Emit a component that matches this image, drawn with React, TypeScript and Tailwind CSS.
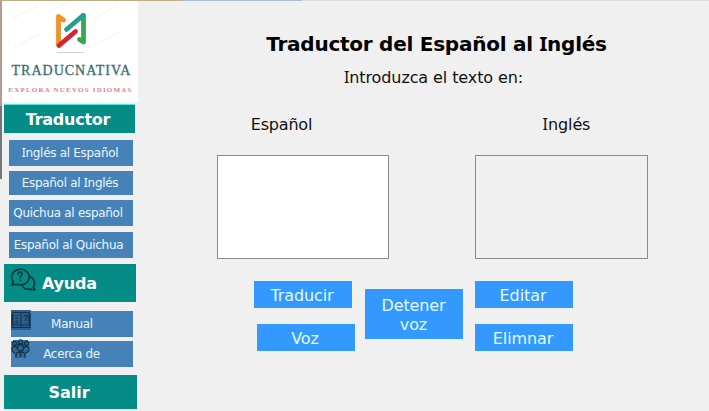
import type { ReactNode } from "react";

function Logo() {
  return (
    <svg className="mt-[10px] ml-[2px] h-[38px] w-[34px] shrink-0" viewBox="0 0 34 38" fill="none" strokeLinecap="round" strokeLinejoin="round">
      <path d="M4.500 34V5.500L9.500 9" stroke="#f0922b" strokeWidth="4.800" />
      <path d="M29.500 4.500V31L25.500 28.500" stroke="#34a853" strokeWidth="4.800" />
      <path d="M12.500 18.500L29 4.500" stroke="#23a094" strokeWidth="4.800" />
      <path d="M5 34.500L21.500 20.500" stroke="#d8232f" strokeWidth="4.800" />
    </svg>
  );
}

function ChatIcon() {
  return (
    <svg className="h-[24px] w-[27px] shrink-0 -translate-y-[3px]" viewBox="0 0 27 24" fill="none" stroke="#0b3c3f" strokeWidth="1.700" strokeLinejoin="round" strokeLinecap="round">
      <path d="M3.200 13.500A8.800 7.800 0 1 1 7.500 16.400L1.300 16.800C2.800 16 3.400 15 3.200 13.500Z" />
      <path d="M19.500 8.500C24 9.500 26 15.500 23.300 18.700L25 22L20.500 21.200C16.500 22 13 20.200 12 17" />
      <path d="M8 6C8.200 3.300 12.800 3.700 12 6.500C11.700 7.700 10.200 7.800 10.200 9.500M10.200 12.300V12.500" strokeWidth="1.800" />
    </svg>
  );
}

function ManualIcon() {
  return (
    <svg className="h-[20px] w-[20px]" viewBox="0 0 20 20" fill="none" stroke="#12344f" strokeWidth="1.200">
      <path d="M0 0H20V20H0Z" fill="#2c618d" stroke="none" />
      <path d="M2 2.500H9L10 3.500L11 2.500H18V15H11L10 16L9 15H2ZM10 3.500V16M1 4V17.500H19V4" />
      <path d="M4 6H7.500M4 8.500H7.500M4 11H7.500M4 13H7.500M13 7C13 4.500 17 4.500 16 7.500L14.500 9.500V11M14.500 13V13.500" />
    </svg>
  );
}

function PeopleIcon() {
  return (
    <svg className="h-[20px] w-[19px]" viewBox="0 0 19 20" fill="none" stroke="#12344f" strokeWidth="1.300">
      <path d="M2 1H17V12L13 19H6L1 12Z" fill="#34688f" stroke="none" />
      <circle cx="9.500" cy="9" r="3" />
      <circle cx="3.500" cy="4.500" r="2" />
      <circle cx="9.500" cy="2.800" r="2" />
      <circle cx="15.500" cy="4.500" r="2" />
      <path d="M5 19V16C5 12 14 12 14 16V19M9.500 13V18M1 12V9C2 7 5 7 6 9M13 9C14 7 17 7 18 9V12M1 12L4 14M18 12L15 14M6.500 6L8 5H11L12.500 6" />
    </svg>
  );
}

function SlabI() {
  return <span className="font-['Noto_Sans',sans-serif] leading-none">I</span>;
}

function Heading({ className, children }: { className: string; children: ReactNode }) {
  return <div className={`flex shrink-0 items-center bg-[#048c86] text-[16px] font-bold text-white ${className}`}>{children}</div>;
}

function NavItem({ className, children }: { className: string; children: ReactNode }) {
  return (
    <button className={`relative block shrink-0 bg-[#4682b7] text-center text-[12px] tracking-[-0.300px] whitespace-nowrap text-[#e6f8ff] ${className}`}>
      {children}
    </button>
  );
}

function Action({ className, children }: { className: string; children: ReactNode }) {
  return (
    <button className={`block w-[98px] shrink-0 bg-[#3399ff] pt-px pr-[2px] text-center text-[16px] leading-[19px] tracking-[-0.100px] text-[#e0fcff] ${className}`}>
      {children}
    </button>
  );
}

export default function App() {
  return (
    <div className="flex h-[411px] w-[709px] flex-col overflow-hidden bg-[#f0f0f0] font-['DejaVu_Sans',Verdana,sans-serif]">
      <div className="flex h-px shrink-0">
        <div className="w-[182px] bg-[#c1ad83]" />
        <div className="w-[120px] bg-[#aebdcb]" />
        <div className="flex-1 bg-[#dbe0e6]" />
      </div>
      <div className="flex min-h-0 flex-1">
        <div className="flex w-[2px] shrink-0 flex-col">
          <div className="h-[105px] bg-[#b39c92]" />
          <div className="h-[73px] bg-[#77777b]" />
        </div>
        <aside className="flex w-[136px] shrink-0 flex-col">
          <div className="relative flex h-[101px] shrink-0 flex-col items-center overflow-hidden bg-white">
            <svg className="absolute inset-0 h-full w-full" viewBox="0 0 136 101" stroke="#f2f2f2" strokeWidth="1">
              <path d="M10 18L36 5M47 10L70 0M91 18L116 4M12 47L38 33M91 45L117 31M20 79L45 66M60 95L85 82M106 80L132 66" />
            </svg>
            <Logo />
            <div className="relative mt-[3px] h-px w-[27px] bg-[#d5cfc9]" />
            <div className="relative mt-[9px] pl-[3px] font-['Liberation_Serif',serif] text-[14px] leading-[18px] tracking-[1px] whitespace-nowrap text-[#386b78] [-webkit-text-stroke:0.300px_#386b78]">TRADUCNATIVA</div>
            <div className="relative mt-[6px] pl-px font-['Liberation_Serif',serif] text-[7px] leading-[9px] font-bold tracking-[1.200px] whitespace-nowrap text-[#dc7f84]">EXPLORA NUEVOS IDIOMAS</div>
          </div>
          <Heading className="mt-[2px] ml-[2px] h-[29px] w-[131px] justify-center border-t border-[#61dedb] pt-px pr-[3px] tracking-[-0.250px]">Traductor</Heading>
          <nav className="ml-[7px] flex w-[124px] flex-col pt-[7px]">
            <NavItem className="h-[26px] pr-[2px]"><SlabI />nglés al Español</NavItem>
            <NavItem className="mt-[5px] h-[24px] pr-[2px]">Español al <SlabI />nglés</NavItem>
            <NavItem className="mt-[5px] h-[26px] pr-[6px]">Quichua al español</NavItem>
            <NavItem className="mt-[6px] h-[26px] pr-[5px]">Español al Quichua</NavItem>
          </nav>
          <Heading className="mt-[6px] ml-[2px] h-[38px] w-[132px] gap-[5px] pl-[6px] tracking-[-0.200px]"><ChatIcon /><span className="pt-px">Ayuda</span></Heading>
          <nav className="ml-[9px] flex w-[122px] flex-col pt-[9px]">
            <NavItem className="h-[26px]"><span className="absolute top-[-1px] left-0"><ManualIcon /></span>Manual</NavItem>
            <NavItem className="mt-[4px] h-[26px] pr-[1px]"><span className="absolute top-[-2px] left-0"><PeopleIcon /></span>Acerca de</NavItem>
          </nav>
          <Heading className="mt-[8px] ml-[2px] h-[34px] w-[133px] justify-center pt-px pr-[3px]">Salir</Heading>
        </aside>
        <main className="flex flex-1 flex-col text-[#111]">
          <h1 className="mt-[29px] pl-[26px] text-center text-[20px] leading-[28px] font-bold tracking-[-0.250px] whitespace-nowrap text-black">Traductor del Español al <SlabI />nglés</h1>
          <p className="mt-[8px] pl-[20px] text-center text-[16px] leading-[24px] tracking-[-0.100px]"><SlabI />ntroduzca el texto en:</p>
          <div className="mt-[23px] ml-[79px] flex w-[431px] justify-between">
            <label className="flex w-[173px] flex-col">
              <span className="pr-[44px] text-center text-[16px] leading-[24px] tracking-[-0.200px]">Español</span>
              <textarea className="mt-[18px] h-[104px] w-[172px] resize-none border border-[#8c8c8c] bg-white" />
            </label>
            <label className="flex w-[173px] flex-col">
              <span className="pl-[10px] text-center text-[16px] leading-[24px] tracking-[-0.100px]"><SlabI />nglés</span>
              <textarea readOnly className="mt-[18px] h-[104px] w-[173px] resize-none border border-[#8c8c8c] bg-[#f0f0f0]" />
            </label>
          </div>
          <div className="mt-[22px] ml-[116px] flex">
            <div className="w-[111px]">
              <Action className="h-[27px]">Traducir</Action>
              <Action className="mt-[16px] ml-[3px] h-[27px]">Voz</Action>
            </div>
            <Action className="mt-[8px] h-[50px] pl-px">Detener<br />voz</Action>
            <div className="ml-[12px]">
              <Action className="h-[27px]">Editar</Action>
              <Action className="mt-[16px] h-[27px]">Elimnar</Action>
            </div>
          </div>
        </main>
      </div>
    </div>
  );
}
